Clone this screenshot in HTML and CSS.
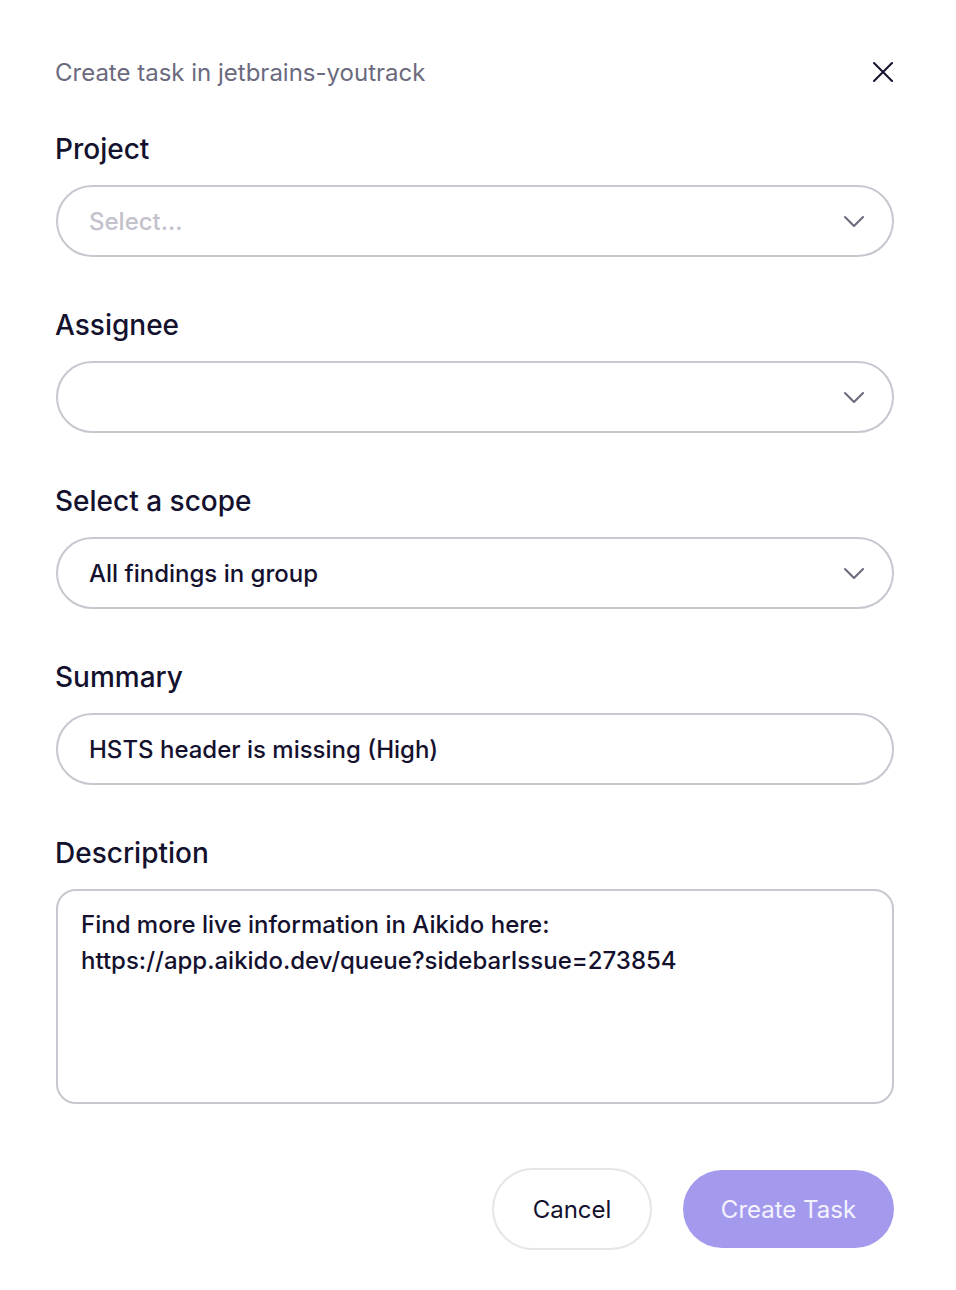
FILE: index.html
```html
<!DOCTYPE html>
<html>
<head>
  <link rel="stylesheet" href="styles.css">
</head>
<body>
  <div class="modal">
    <div class="modal-header">
      <span class="modal-title">Create task in jetbrains-youtrack</span>
      <button class="close-button" type="button">
        <svg width="20" height="20" viewBox="0 0 20 20"><path d="M1 1 L19 19 M19 1 L1 19" stroke="#14112e" stroke-width="2" stroke-linecap="round"/></svg>
      </button>
    </div>

    <div class="field">
      <label class="field-label">Project</label>
      <div class="select">
        <span class="placeholder">Select...</span>
        <svg class="chevron" width="22" height="14" viewBox="0 0 22 14"><path d="M2 2 L11 11 L20 2" fill="none" stroke="#6b6a7e" stroke-width="2" stroke-linecap="round" stroke-linejoin="round"/></svg>
      </div>
    </div>

    <div class="field">
      <label class="field-label">Assignee</label>
      <div class="select">
        <span></span>
        <svg class="chevron" width="22" height="14" viewBox="0 0 22 14"><path d="M2 2 L11 11 L20 2" fill="none" stroke="#6b6a7e" stroke-width="2" stroke-linecap="round" stroke-linejoin="round"/></svg>
      </div>
    </div>

    <div class="field">
      <label class="field-label">Select a scope</label>
      <div class="select">
        <span class="value">All findings in group</span>
        <svg class="chevron" width="22" height="14" viewBox="0 0 22 14"><path d="M2 2 L11 11 L20 2" fill="none" stroke="#6b6a7e" stroke-width="2" stroke-linecap="round" stroke-linejoin="round"/></svg>
      </div>
    </div>

    <div class="field">
      <label class="field-label">Summary</label>
      <div class="select">
        <span class="value">HSTS header is missing (High)</span>
      </div>
    </div>

    <div class="field">
      <label class="field-label">Description</label>
      <div class="textarea">Find more live information in Aikido here:<br>https://app.aikido.dev/queue?sidebarIssue=273854</div>
    </div>

    <div class="actions">
      <button class="btn btn-cancel" type="button">Cancel</button>
      <button class="btn btn-primary" type="button">Create Task</button>
    </div>
  </div>
</body>
</html>
```

FILE: styles.css
```css
body {
  margin: 0;
  background-color: #fff;
  font-family: Inter, "Noto Sans", sans-serif;
  color: #14112e;
}
.modal {
  padding: 56px 62px 40px 55px;
}
.modal-header {
  display: flex;
  justify-content: space-between;
  align-items: center;
  height: 32px;
  margin-bottom: 45px;
}
.modal-title {
  font-size: 24px;
  color: #6b6a7e;
}
.close-button {
  background: none;
  border: none;
  padding: 0;
  margin-right: 1px;
  display: flex;
  cursor: pointer;
}
.field {
  margin-bottom: 52px;
}
.field-label {
  display: block;
  font-size: 28px;
  font-weight: 500;
  line-height: 32px;
  margin-bottom: 20px;
}
.select {
  display: flex;
  justify-content: space-between;
  align-items: center;
  box-sizing: border-box;
  height: 72px;
  margin-left: 1px;
  border: 2px solid #c8c7d0;
  border-radius: 36px;
  padding: 0 27px 0 31px;
  font-size: 24px;
  font-weight: 500;
}
.placeholder {
  color: #c3c2cc;
}
.chevron {
  margin-top: 2px;
}
.textarea {
  box-sizing: border-box;
  height: 215px;
  margin-left: 1px;
  border: 2px solid #c8c7d0;
  border-radius: 20px;
  padding: 16px 23px;
  font-size: 24px;
  font-weight: 500;
  line-height: 36px;
}
.actions {
  display: flex;
  justify-content: flex-end;
  align-items: center;
  gap: 31px;
  margin-top: 64px;
}
.btn {
  font-family: Inter, "Noto Sans", sans-serif;
  font-size: 24px;
  border-radius: 41px;
  cursor: pointer;
}
.btn-cancel {
  width: 160px;
  height: 82px;
  background: #fff;
  border: 2px solid #e5e5ea;
  color: #14112e;
}
.btn-primary {
  width: 211px;
  height: 78px;
  background-color: #a39aee;
  border: none;
  color: #f4f2fd;
}
```
